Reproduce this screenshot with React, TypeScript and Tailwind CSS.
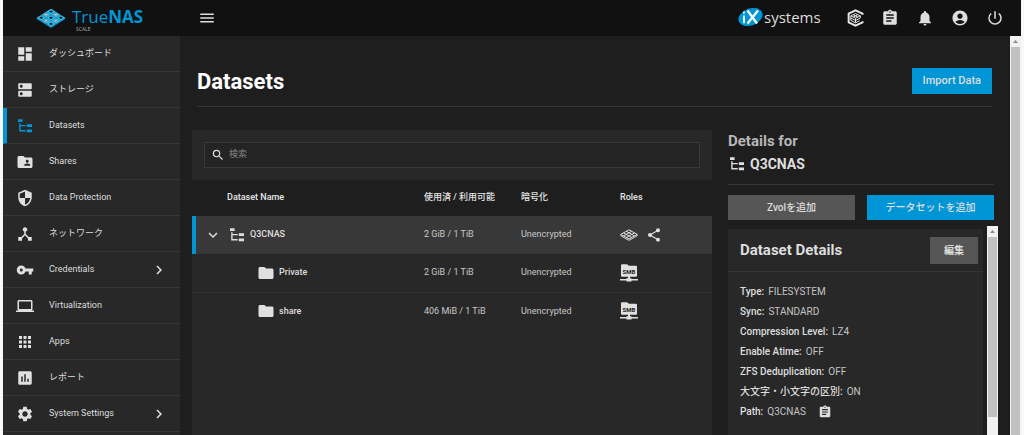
import React from "react";
import {
  MdDashboard, MdDns, MdFolderShared, MdSecurity, MdDeviceHub, MdVpnKey, MdOutlineLaptop,
  MdApps, MdAssessment, MdSettings, MdChevronRight, MdMenu, MdAssignment, MdNotifications,
  MdAccountCircle, MdPowerSettingsNew, MdSearch, MdFolder, MdShare, MdExpandMore,
} from "react-icons/md";

function Tree({ className = "" }: { className?: string }) {
  return (
    <svg viewBox="0 0 14 14" className={className} fill="currentColor" aria-hidden="true">
      <path d="M0 .3h4.6v2.8H0zM8.8 5.3H14v2.8H8.8zM8.8 10.4H14v2.8H8.8z" />
      <path d="M1.9 4.3v7.5h5.8M1.9 6.6h5.8" fill="none" stroke="currentColor" strokeWidth="1.4" />
    </svg>
  );
}

function Diamond({ className = "" }: { className?: string }) {
  const cells: [number, number, boolean][] = [];
  for (let i = 0; i < 3; i++)
    for (let j = 0; j < 3; j++) cells.push([15 + (i - j) * 4.9, 3.6 + (i + j) * 3.1, (i + j) % 2 === 1]);
  return (
    <svg viewBox="0 0 30 21" className={className} aria-hidden="true">
      {cells.map(([x, y, accent], k) => (
        <g key={k}>
          <path d={`M${x - 4.3} ${y}v1.4l4.3 2.7 4.3-2.7V${y}L${x} ${y + 2.7}z`} fill="#0a7fb3" />
          <path
            d={`M${x} ${y - 2.9}l4.6 2.9-4.6 2.9-4.6-2.9zm0 1.7l-2 1.2 2 1.2 2-1.2z`}
            fillRule="evenodd"
            fill="#31beec"
          />
          {accent && <path d={`M${x} ${y - 1.2}l2 1.2-2 1.2-2-1.2z`} fill="#d4cdc9" />}
        </g>
      ))}
    </svg>
  );
}

function PoolIcon() {
  return (
    <svg viewBox="0 0 18 12" className="h-3 w-[18px]" fill="none" stroke="#e0e0e0" role="img" aria-label="System dataset">
      <path d="M9 .8L17.2 5.4 9 10 .8 5.4zM6.3 2.3l8.2 4.6M3.5 3.9l8.2 4.6M11.7 2.3L3.5 6.9M14.5 3.9L6.3 8.5" strokeWidth="1" />
      <path d="M.8 5.4v1.4L9 11.4l8.2-4.6V5.4" strokeWidth=".9" />
    </svg>
  );
}

function IxLogo() {
  return (
    <svg viewBox="0 0 88 24" className="h-6 w-[88px]" role="img" aria-label="iX systems">
      <ellipse cx="13.5" cy="11" rx="12.5" ry="8.5" transform="rotate(-20 13.5 11)" fill="#0095d5" />
      <path d="M7 9.5v7.7M7 5.4v2" stroke="#fff" strokeWidth="1.8" />
      <path d="M10.5 4.5l9.5 13M21 4.5l-10.5 13" stroke="#fff" strokeWidth="2.2" />
      <text x="27" y="17" fontFamily="Open Sans, sans-serif" fontSize="15" fill="#dedede">systems</text>
    </svg>
  );
}

function TrueCommand() {
  return (
    <svg viewBox="0 0 18 20" className="h-[18px] w-[17px]" fill="none" stroke="#e6e6e6" aria-hidden="true">
      <path d="M16.8 6.4V5.2L9 1.4 1.4 5.2v9.6L9 18.6l7.8-3.8v-1.2" strokeWidth="2.2" />
      <path d="M9 5l5.3 2.6L9 10.3 3.8 7.6zM3.8 7.6v5L9 15.4l4.6-2.4M9 10.3v5M6.4 6.3l5.2 2.7M11.6 6.3L6.4 9M3.8 10.1L9 12.8l5.3-2.7V7.6" strokeWidth="1.1" />
    </svg>
  );
}

function Smb() {
  return (
    <svg viewBox="0 0 18 18" className="h-[18px] w-[18px]" fill="#e0e0e0" role="img" aria-label="SMB">
      <path d="M1 1.3Q1 .3 2 .3h5l2 1.5h7q1 0 1 1v9q0 1-1 1H2q-1 0-1-1z" />
      <path d="M8 12h2v3H8zM0 15h18v1.6H0zM6.5 14.2h5v3.4h-5z" />
      <text x="9" y="9.5" textAnchor="middle" fontFamily="Roboto, sans-serif" fontSize="6" fontWeight="700" fill="#222">SMB</text>
    </svg>
  );
}

function ScrollBar({ long = false }: { long?: boolean }) {
  return (
    <div aria-hidden="true" className="flex w-[11px] shrink-0 flex-col bg-[#f1f1f1] px-px">
      <svg viewBox="0 0 9 11" className="h-[11px] w-[9px] shrink-0">
        <path d="M2 7l2.5-3L7 7z" fill="#8b8b8b" />
      </svg>
      <div className={long ? "flex-1 bg-[#c1c1c1]" : "mb-[18px] flex-1 bg-[#c1c1c1]"} />
    </div>
  );
}

const nav = [
  { label: "ダッシュボード", icon: MdDashboard },
  { label: "ストレージ", icon: MdDns },
  { label: "Datasets", icon: null, active: true },
  { label: "Shares", icon: MdFolderShared },
  { label: "Data Protection", icon: MdSecurity },
  { label: "ネットワーク", icon: MdDeviceHub },
  { label: "Credentials", icon: MdVpnKey, more: true },
  { label: "Virtualization", icon: MdOutlineLaptop },
  { label: "Apps", icon: MdApps },
  { label: "レポート", icon: MdAssessment },
  { label: "System Settings", icon: MdSettings, more: true },
];

const details = [
  ["Type:", "FILESYSTEM"],
  ["Sync:", "STANDARD"],
  ["Compression Level:", "LZ4"],
  ["Enable Atime:", "OFF"],
  ["ZFS Deduplication:", "OFF"],
  ["大文字・小文字の区別:", "ON"],
  ["Path:", "Q3CNAS"],
];

const topIcons = [
  { label: "Jobs", icon: MdAssignment },
  { label: "Alerts", icon: MdNotifications },
  { label: "Account", icon: MdAccountCircle },
  { label: "Power", icon: MdPowerSettingsNew },
];

const children = [
  { name: "Private", used: "2 GiB / 1 TiB" },
  { name: "share", used: "406 MiB / 1 TiB" },
];

function DatasetTable() {
  return (
    <table className="w-full table-fixed border-collapse text-left text-[9px]">
      <thead>
        <tr className="h-9 bg-[#1e1e1e] text-[#e6e6e6]">
          <th className="w-[232px] pl-[35px] font-medium">Dataset Name</th>
          <th className="w-[97px] font-medium">使用済 / 利用可能</th>
          <th className="w-[99px] font-medium">暗号化</th>
          <th className="font-medium">Roles</th>
        </tr>
      </thead>
      <tbody className="text-[#c8c8c8]">
        <tr className="h-[38px] bg-[#383838]">
          <td className="shadow-[inset_4px_0_#0095d5]">
            <div className="flex items-center pl-3 font-medium text-[#dedede]">
              <button aria-label="Collapse"><MdExpandMore className="size-[18px]" /></button>
              <Tree className="ml-2 size-3.5" />
              <span className="ml-1.5">Q3CNAS</span>
            </div>
          </td>
          <td>2 GiB / 1 TiB</td>
          <td>Unencrypted</td>
          <td>
            <div className="flex items-center gap-2 text-[#e0e0e0]">
              <PoolIcon />
              <MdShare className="size-4" />
            </div>
          </td>
        </tr>
        {children.map((row) => (
          <tr key={row.name} className="h-[38px] border-b border-[#333] last:border-b-0">
            <td>
              <div className="flex items-center pl-[65px] font-medium text-[#dedede]">
                <MdFolder className="size-[18px] text-[#e0e0e0]" />
                <span className="ml-1">{row.name}</span>
              </div>
            </td>
            <td>{row.used}</td>
            <td>Unencrypted</td>
            <td><Smb /></td>
          </tr>
        ))}
      </tbody>
    </table>
  );
}

function DetailsPanel() {
  return (
    <aside className="flex w-[298px] shrink-0 flex-col pl-4">
      <div className="mr-4 border-b border-[#353535] pb-2">
        <h2 className="text-[15px] leading-[22px] font-bold text-[#b8b8b8]">Details for</h2>
        <p className="flex items-center text-sm leading-6 font-bold">
          <Tree className="mr-1.5 ml-0.5 size-3.5" />Q3CNAS
        </p>
      </div>
      <div className="mt-[10px] mr-4 flex gap-3 text-[10px] font-medium">
        <button className="h-[25px] flex-1 bg-[#565656]">Zvolを追加</button>
        <button className="h-[25px] flex-1 bg-[#0095d5]">データセットを追加</button>
      </div>
      <div className="mt-1.5 mr-3 flex min-h-0 flex-1">
        <div className="mt-[3px] mr-1 min-w-0 flex-1 overflow-hidden bg-[#282828]">
          <div className="flex h-[43px] items-center justify-between border-b border-[#353535] pr-[5px] pl-3">
            <h3 className="text-[15px] font-bold">Dataset Details</h3>
            <button className="h-[27px] w-12 bg-[#565656] text-[10px] font-bold">編集</button>
          </div>
          <dl className="px-3 pt-[10px] text-[10px] leading-5">
            {details.map(([name, value]) => (
              <div key={name} className="flex h-5 items-center">
                <dt className="font-medium">{name}</dt>
                <dd className="ml-1 text-[#c4c4c4]">{value}</dd>
                {name === "Path:" && (
                  <dd className="ml-3 flex">
                    <button aria-label="Copy path"><MdAssignment className="size-3.5" /></button>
                  </dd>
                )}
              </div>
            ))}
          </dl>
        </div>
        <ScrollBar />
      </div>
    </aside>
  );
}

export default function App() {
  return (
    <div className="flex h-screen flex-col overflow-hidden border-x-[3px] border-[#f8f8f8] bg-[#1e1e1e] font-['Roboto','Noto_Sans_CJK_JP',sans-serif] text-[#dedede]">
      <header className="flex h-9 shrink-0 items-center bg-[#111]">
        <a href="#home" aria-label="TrueNAS SCALE" className="flex w-[177px] shrink-0 items-center pl-[33px]">
          <Diamond className="h-[21px] w-[30px]" />
          <span className="ml-1.5 flex flex-col pt-1 font-['Open_Sans',sans-serif]">
            <span className="text-[17px] leading-[18px] text-[#0095d5]">True<b>NAS</b></span>
            <span className="pl-1 text-[5px] leading-[6px] text-[#aaa]">SCALE</span>
          </span>
        </a>
        <button aria-label="Menu" className="ml-[18px]"><MdMenu className="size-[18px]" /></button>
        <div className="ml-auto flex items-center pr-[17px]">
          <IxLogo />
          <button aria-label="TrueCommand" className="ml-[22px]"><TrueCommand /></button>
          <div className="ml-[17px] flex gap-[17px]">
            {topIcons.map(({ label, icon: Icon }) => (
              <button key={label} aria-label={label}><Icon className="size-[18px]" /></button>
            ))}
          </div>
        </div>
      </header>

      <div className="flex min-h-0 flex-1">
        <nav className="w-[177px] shrink-0 overflow-hidden bg-[#282828] text-[9px]">
          {nav.map(({ label, icon: Icon, active, more }) => (
            <a
              key={label}
              href="#nav"
              className={
                active
                  ? "flex h-9 items-center border-b border-l-4 border-b-[#353535] border-l-[#0095d5] pl-[9px]"
                  : "flex h-9 items-center border-b border-b-[#353535] pl-[13px]"
              }
            >
              {Icon ? (
                <Icon className="size-[18px] text-[#e0e0e0]" />
              ) : (
                <Tree className="mx-0.5 size-3.5 text-[#0095d5]" />
              )}
              <span className="ml-[15px]">{label}</span>
              {more && <MdChevronRight className="mr-3 ml-auto size-[18px]" />}
            </a>
          ))}
        </nav>

        <main className="flex min-w-0 flex-1 flex-col">
          <div className="mr-[18px] ml-[17px] flex h-[71px] shrink-0 items-center justify-between border-b border-[#353535] pt-5">
            <h1 className="text-[22px] font-bold text-white">Datasets</h1>
            <button className="h-[26px] bg-[#0095d5] px-[11px] text-[11px] font-medium">Import Data</button>
          </div>
          <div className="mt-[23px] flex min-h-0 flex-1 pl-3">
            <section className="flex min-w-0 flex-1 flex-col bg-[#282828]">
              <div className="p-3">
                <label className="flex h-[26px] items-center border border-[#383838] bg-[#242424] pl-1.5">
                  <MdSearch className="size-3.5" />
                  <input
                    aria-label="検索"
                    placeholder="検索"
                    className="ml-1 min-w-0 flex-1 bg-transparent text-[9px] outline-none placeholder:text-[#858585]"
                  />
                </label>
              </div>
              <DatasetTable />
            </section>
            <DetailsPanel />
          </div>
        </main>
        <ScrollBar long />
      </div>
    </div>
  );
}
